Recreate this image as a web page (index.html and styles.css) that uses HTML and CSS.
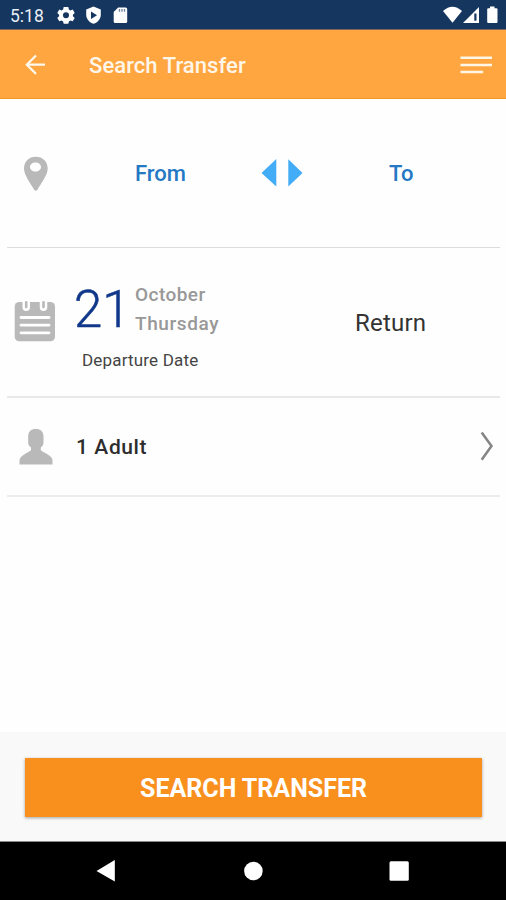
FILE: index.html
```html
<!DOCTYPE html>
<html lang="en">
<head>
<meta charset="utf-8">
<title>Search Transfer</title>
<link rel="stylesheet" href="styles.css">
</head>
<body>
<div class="screen">
  <div class="status">
    <span class="clock">5:18</span>
    <svg class="status-left" width="74" height="20" viewBox="56 5 74 20">
      <path fill="#fff" fill-rule="evenodd" d="M63.700 7h4.600l.6 2.500 1.500.9 2.300-.8 2 3.500-1.800 1.600v1.600l1.800 1.600-2 3.400-2.300-.8-1.500.9-.6 2.300h-4.600l-.6-2.300-1.500-.9-2.300.8-2-3.400 1.800-1.600v-1.600l-1.800-1.600 2-3.500 2.300.8 1.500-.9zM66 12.300a3 3 0 1 0 0 6 3 3 0 0 0 0-6z"/>
      <path fill="#fff" d="M93.500 6.500l7.300 3v5.300c0 4.200-3 7.700-7.300 9-4.300-1.300-7.300-4.800-7.300-9V9.500z"/>
      <path fill="#14365f" d="M91 11.400l6 3.800-6 3.800z"/>
      <path fill="#fff" d="M118.200 7.500h7.500q1.500 0 1.500 1.500v12.500q0 1.500-1.500 1.500h-10.500q-1.500 0-1.500-1.500V12z"/>
      <path stroke="#6d819b" stroke-width="1.300" d="M119.500 9v2.700M122 9v2.700M124.500 9v2.700"/>
    </svg>
    <svg class="status-right" width="58" height="20" viewBox="442 5 58 20">
      <path fill="#fff" d="M443 11q9.500-8.500 19 0l-9.500 11.700z"/>
      <path fill="#fff" d="M463 23L479 7v16z"/>
      <path fill="#14365f" d="M474.300 13.500h2.200v7.200h-2.200z"/>
      <path fill="#fff" d="M490 6.500h4.500v1.700h2q1 0 1 1V22q0 1-1 1h-8.300q-1 0-1-1V9.200q0-1 1-1h1.800z"/>
    </svg>
  </div>
  <header class="header">
    <svg width="22" height="22" viewBox="24 54 22 22" fill="none" stroke="#fff8ec" stroke-width="2.200"><path d="M45 64.700H27M36 55.500l-9.200 9.200 9.200 9.200"/></svg>
    <h1 class="title">Search Transfer</h1>
    <svg class="menu" width="32" height="20" viewBox="460 54 32 20" stroke="#fff6e6" stroke-width="2.600"><path d="M460.500 56.700h31.500M460.500 64h31.500M460.500 71h22.700"/></svg>
  </header>
  <main class="form">
    <section class="row route">
      <svg class="pin" width="26" height="36" viewBox="23 156 26 36"><path fill="#b9b9b9" fill-rule="evenodd" d="M35.800 156.700c7 0 11.900 4.800 11.900 11.900 0 6.400-6.500 15-10.100 20.800q-1.800 2.800-3.600 0C30.400 183.600 24 175 24 168.600c0-7.100 4.800-11.900 11.800-11.900zM35.500 162.500c-3.200 0-5.500 1.900-5.500 4.500s2.300 4.500 5.500 4.500 5.500-1.900 5.500-4.500-2.300-4.500-5.500-4.500z"/></svg>
      <span class="place from">From</span>
      <svg class="swap" width="42" height="28" viewBox="261 159 42 28" fill="#42acf7"><path d="M276.300 159v27.500L261.500 173zM288.300 159.300l14.200 13.700-14.200 13.500z"/></svg>
      <span class="place to">To</span>
    </section>
    <section class="row dates">
      <svg class="calendar" width="42" height="42" viewBox="14 300 42 42">
        <rect x="14.700" y="302" width="40.300" height="39.300" rx="4.500" fill="#b9b9b9"/>
        <path stroke="#fff" stroke-width="7.500" stroke-linecap="round" d="M26.200 299v8.300M43.500 299v8.300"/>
        <path stroke="#b9b9b9" stroke-width="2.600" stroke-linecap="round" d="M26.200 302.300v4.700M43.500 302.300v4.700"/>
        <path stroke="#fff" stroke-width="2.800" stroke-linecap="round" d="M21 317.500h28M21 325.200h28M21 332.800h28"/>
      </svg>
      <div class="departure">
        <div class="date">
          <span class="day">21</span>
          <div class="names"><span class="month">October</span><span class="weekday">Thursday</span></div>
        </div>
        <span class="caption">Departure Date</span>
      </div>
      <span class="return">Return</span>
    </section>
    <section class="row people">
      <svg class="person" width="34" height="36" viewBox="19 429 34 36"><path fill="#b9b9b9" d="M35.800 429c5 0 7.700 2.600 7.700 7.300v6.500c0 2.300-1.100 3.600-2.700 4.600v2.800c3 2.300 8 4.200 10.200 6.700q1.500 1.600 1.500 3.700v4h-33v-4q0-2.100 1.500-3.700c2.200-2.500 7-4.400 10-6.700v-2.800c-1.700-1-2.800-2.300-2.800-4.600v-6.500c0-4.700 2.600-7.300 7.600-7.300z"/></svg>
      <span class="adults">1 Adult</span>
      <svg class="chevron" width="14" height="30" viewBox="480 431 14 30" fill="none" stroke="#858585" stroke-width="2.500"><path d="M481.700 431.500l9.800 13.600-9.800 13.600"/></svg>
    </section>
  </main>
  <footer class="actions"><button class="search">SEARCH TRANSFER</button></footer>
  <nav class="nav">
    <svg width="20" height="22" viewBox="96 860 20 22"><path fill="#fff" d="M114.800 860v21.500L96.500 871z"/></svg>
    <svg width="20" height="22" viewBox="243 860 20 22"><circle cx="253.400" cy="871" r="9.300" fill="#fff"/></svg>
    <svg width="20" height="22" viewBox="389 860 20 22"><rect x="389.500" y="861.300" width="19.300" height="19.500" rx="1.500" fill="#fff"/></svg>
  </nav>
</div>
</body>
</html>
```
FILE: styles.css
```css
* { box-sizing: border-box; }
body { margin: 0; background: #fff; font-family: Roboto, "Liberation Sans", sans-serif; }
svg { display: block; flex: none; }
.screen { width: 506px; height: 900px; display: flex; flex-direction: column; background: #fefefe; }

.status { height: 30px; flex: none; display: flex; align-items: center; padding: 0 6px 0 10px; background: #14365f; border-bottom: 1px solid #7c6458; }
.clock { width: 46px; font-size: 17.5px; line-height: 20px; color: #e9eef5; padding-top: 2px; }
.status-right { margin-left: auto; }

.header { height: 69px; flex: none; display: flex; align-items: center; padding: 2px 14px 0 24px; background: #ffa640; border-bottom: 1px solid #f09a22; }
.title { margin: 0 0 0 43px; padding-top: 2px; font-size: 22px; font-weight: 500; line-height: 28px; letter-spacing: .07px; color: #fff6ea; }
.menu { margin-left: auto; }

.form { height: 633px; flex: none; }
.row { display: flex; margin: 0 6px 0 7px; }
.route { height: 149px; align-items: center; border-bottom: 1px solid #dcdcdc; }
.pin { margin: 2px 0 0 16px; }
.place { padding-top: 2px; font-size: 22px; font-weight: 500; line-height: 28px; color: #2478c4; }
.from { width: 126px; margin-left: 86px; }
.swap { margin-right: 86px; }

.dates { height: 150px; border-bottom: 2px solid #e9e9e9; }
.calendar { margin: 52px 0 0 7px; }
.departure { width: 299px; padding: 29px 0 0 17px; }
.date { display: flex; height: 71px; }
.day { width: 62px; padding: 1px 0 0 1px; font-size: 51px; line-height: 63px; color: #10388a; font-weight: 300; -webkit-text-stroke: .5px #10388a; }
.names { display: flex; flex-direction: column; font-size: 19px; font-weight: 500; line-height: 29px; letter-spacing: .45px; color: #989898; padding-top: 3px; }
.weekday { letter-spacing: .6px; }
.caption { display: block; margin-left: 9px; font-size: 17px; line-height: 24px; letter-spacing: .18px; color: #444; }
.return { margin-top: 61px; font-size: 24px; line-height: 28px; letter-spacing: .2px; color: #333; }

.people { height: 99px; align-items: center; border-bottom: 2px solid #ededed; }
.person { margin-left: 12px; }
.adults { margin-left: 23px; font-size: 21px; font-weight: 500; line-height: 28px; letter-spacing: .6px; color: #2d2d2d; }
.chevron { margin-left: auto; margin-right: 6px; }

.actions { height: 110px; flex: none; padding: 26px 24px 0 25px; background: #f9f9fa; border-bottom: 1px solid #8a8a8a; }
.search { display: block; width: 100%; height: 59px; padding: 2px 0 0; border: 0; background: #f9901e; box-shadow: 0 1px 3px rgba(0, 0, 0, .35); font-family: inherit; font-size: 25px; font-weight: 700; line-height: 57px; color: #fff; }

.nav { height: 58px; flex: none; display: flex; align-items: center; justify-content: space-between; padding: 0 97px 0 96px; background: #000; }
```
